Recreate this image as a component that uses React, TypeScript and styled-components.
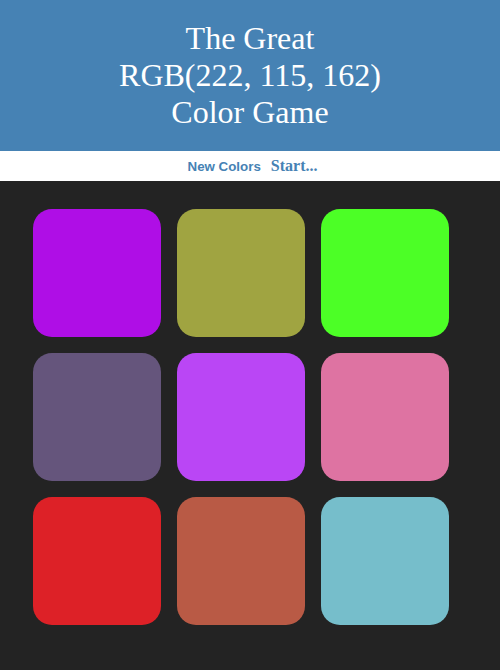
import React from "react";
import styled, { createGlobalStyle } from "styled-components";

const Global = createGlobalStyle`
  html, body { margin: 0; padding: 0; background: #232323; }
  body { font-family: "Liberation Sans", Arial, sans-serif; }
`;

const Header = styled.h1`
  margin: 0;
  padding: 20px 0 21px;
  background: steelblue;
  color: #fff;
  font-family: "Liberation Serif", "Times New Roman", serif;
  font-weight: normal;
  font-size: 32px;
  line-height: 36.8px;
  text-align: center;
`;

const Stripe = styled.div`
  background: #fff;
  height: 30px;
  display: flex;
  align-items: center;
  justify-content: center;
  gap: 10px;
  padding-left: 5px;
`;

const Button = styled.button`
  border: none;
  background: none;
  padding: 0;
  color: steelblue;
  font-family: "Liberation Sans", Arial, sans-serif;
  font-weight: bold;
  font-size: 13.333px;
  margin-top: 1px;
`;

const Message = styled.span`
  color: steelblue;
  font-family: "Liberation Serif", "Times New Roman", serif;
  font-weight: bold;
  font-size: 16px;
`;

const Board = styled.div`
  display: grid;
  grid-template-columns: repeat(3, 128px);
  grid-auto-rows: 128px;
  gap: 16px;
  padding: 28px 33px 45px;
  background: #232323;
`;

const Square = styled.div<{ $c: string }>`
  background: ${(p) => p.$c};
  border-radius: 19px;
`;

const colors = [
  "rgb(175, 14, 230)",
  "rgb(160, 164, 65)",
  "rgb(76, 255, 38)",
  "rgb(101, 85, 124)",
  "rgb(186, 70, 245)",
  "rgb(222, 115, 162)",
  "rgb(221, 33, 39)",
  "rgb(185, 90, 69)",
  "rgb(118, 190, 203)",
];

export default function App() {
  return (
    <>
      <Global />
      <Header>
        The Great
        <br />
        RGB(222, 115, 162)
        <br />
        Color Game
      </Header>
      <Stripe>
        <Button>New Colors</Button>
        <Message>Start...</Message>
      </Stripe>
      <Board>
        {colors.map((c, i) => (
          <Square key={i} $c={c} />
        ))}
      </Board>
    </>
  );
}
